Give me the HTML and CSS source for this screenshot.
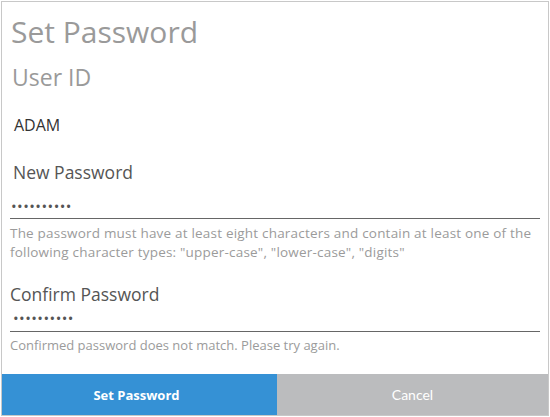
FILE: index.html
```html
<!DOCTYPE html>
<html>
<head>
<meta charset="utf-8">
<link rel="stylesheet" href="styles.css">
</head>
<body>
<div class="dialog">
  <div class="content">
    <h1 class="title">Set Password</h1>
    <div class="label-lg">User ID</div>
    <div class="user">ADAM</div>
    <div class="field">
      <div class="label">New Password</div>
      <div class="input">••••••••••</div>
      <div class="hint">The password must have at least eight characters and contain at least one of the following character types: "upper-case", "lower-case", "digits"</div>
    </div>
    <div class="field confirm">
      <div class="label">Confirm Password</div>
      <div class="input">••••••••••</div>
      <div class="hint small">Confirmed password does not match. Please try again.</div>
    </div>
  </div>
  <div class="actions">
    <button class="btn primary">Set Password</button>
    <button class="btn secondary">Cancel</button>
  </div>
</div>
</body>
</html>
```
FILE: styles.css
```css
html, body {
  margin: 0;
  padding: 0;
  background: #fff;
}
body {
  padding: 1px;
  font-family: "Open Sans", "Noto Sans", sans-serif;
}
.dialog {
  width: 548px;
  height: 415px;
  box-sizing: border-box;
  border: 1px solid #c8c8c8;
  display: flex;
  flex-direction: column;
}
.content {
  flex: 1;
  padding: 0 8px;
}
.title {
  margin: 0;
  font-weight: normal;
  font-size: 30px;
  line-height: 40px;
  color: #9a9a9a;
  padding-top: 10px;
  padding-left: 1px;
}
.label-lg {
  font-size: 23px;
  line-height: 30px;
  color: #9a9a9a;
  padding-left: 2px;
  margin-top: 10px;
}
.user {
  font-size: 16px;
  line-height: 20px;
  color: #333;
  margin-top: 23px;
  padding-left: 4px;
}
.field {
  margin-top: 25px;
}
.label {
  font-size: 17.5px;
  line-height: 24px;
  color: #555;
  padding-left: 3px;
}
.input {
  font-size: 15px;
  letter-spacing: 0.45px;
  line-height: 20px;
  color: #555;
  padding: 0 0 2px 1px;
  margin-top: 12px;
  border-bottom: 1px solid #666;
}
.field:first-of-type .input {
  margin-left: 2px;
}
.hint {
  font-size: 13.5px;
  letter-spacing: 0.2px;
  line-height: 19px;
  color: #9b9b9b;
  margin-top: 5px;
}
.confirm {
  margin-top: 20px;
}
.confirm .label {
  padding-left: 0;
}
.confirm .input {
  margin-top: 2px;
  padding-bottom: 3px;
  padding-left: 3px;
}
.hint.small {
  font-size: 13px;
  letter-spacing: 0;
  margin-top: 4px;
}
.actions {
  display: flex;
  height: 41px;
}
.btn {
  border: none;
  margin: 0;
  padding: 0;
  color: #fff;
  cursor: pointer;
}
.primary {
  flex: 0 0 275px;
  background: #3591d5;
  font-family: "Open Sans", sans-serif;
  font-weight: 700;
  font-size: 13px;
  padding-right: 6px;
}
.secondary {
  flex: 1;
  background: #bbbcbe;
  font-family: "Lato", sans-serif;
  font-size: 14px;
}
```
